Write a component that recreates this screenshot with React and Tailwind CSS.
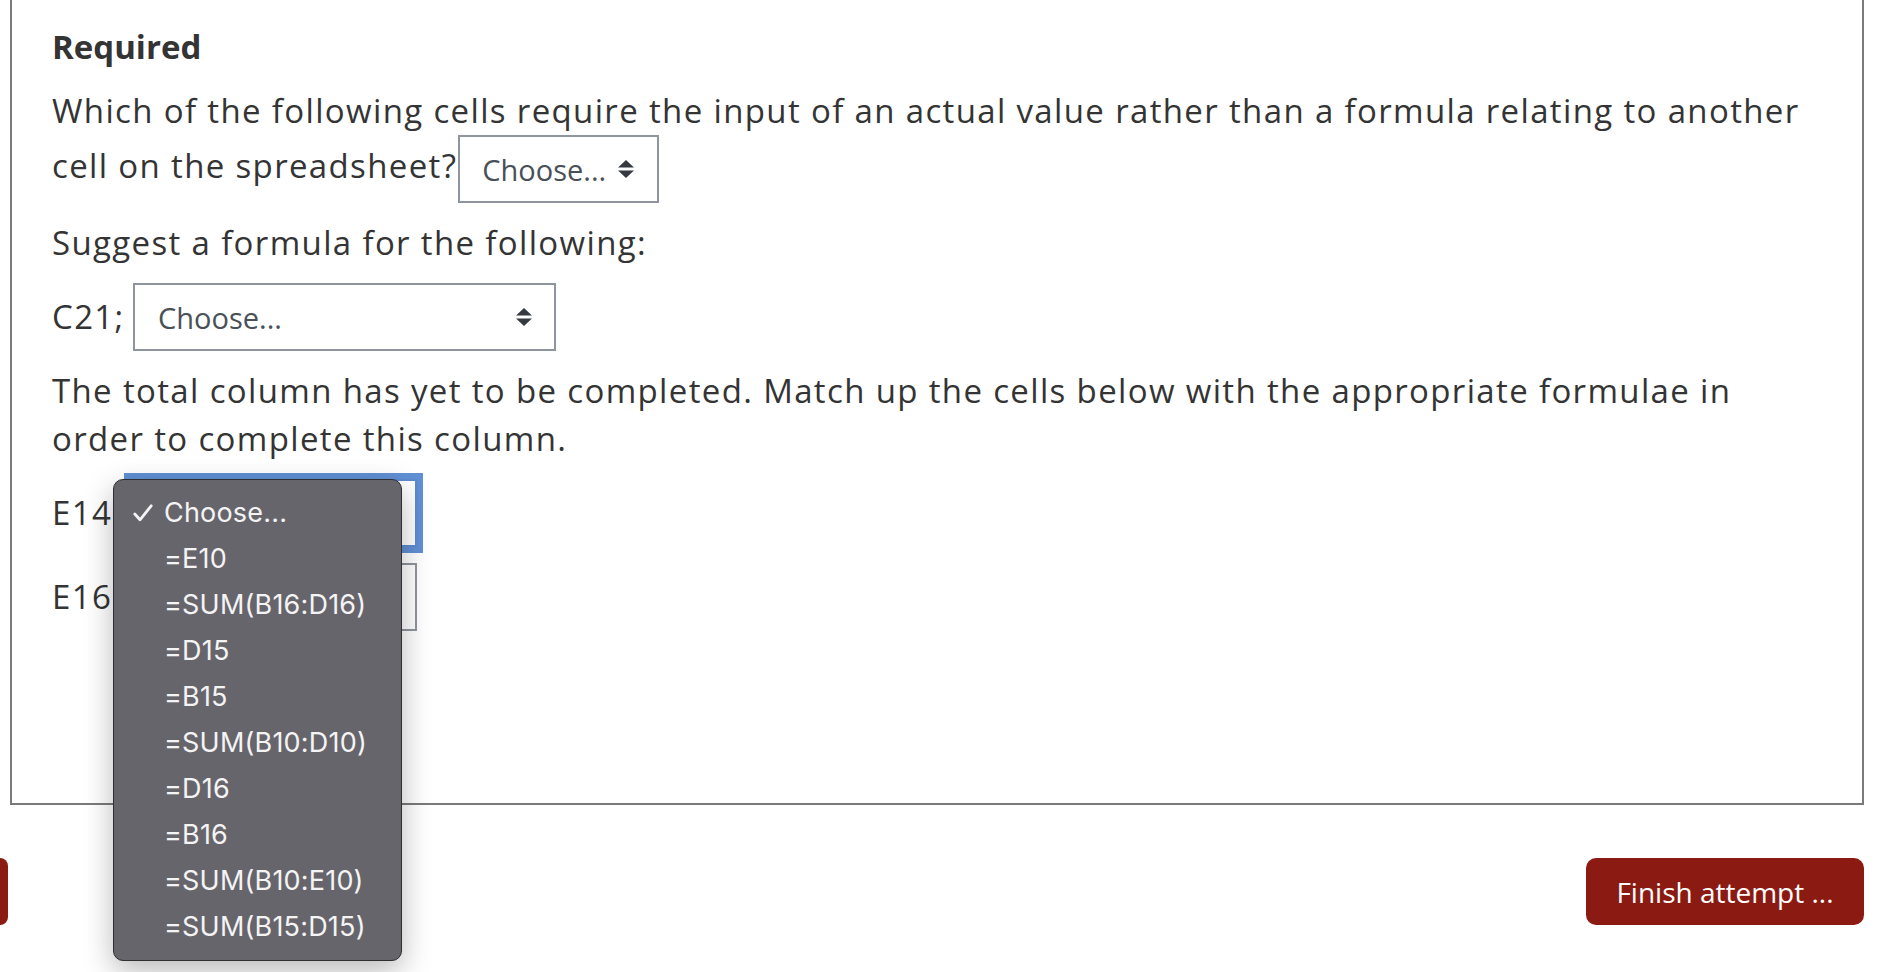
import React from "react";

const OPTIONS = [
  "Choose...",
  "=E10",
  "=SUM(B16:D16)",
  "=D15",
  "=B15",
  "=SUM(B10:D10)",
  "=D16",
  "=B16",
  "=SUM(B10:E10)",
  "=SUM(B15:D15)",
];

function Arrows() {
  return (
    <svg width="16" height="18" viewBox="0 0 16 18" className="shrink-0">
      <path d="M8 0 L16 7.5 L0 7.5 Z" fill="#343a40" />
      <path d="M0 10.5 L16 10.5 L8 18 Z" fill="#343a40" />
    </svg>
  );
}

function Select({ className = "", padL = "pl-[22px]", padR = "pr-[22px]" }) {
  return (
    <span
      className={`inline-flex items-center justify-between h-[68px] border-2 border-[#8f959e] bg-white align-middle text-[29px] tracking-normal text-[#495057] ${padL} ${padR} ${className}`}
    >
      <span className="leading-none">Choose...</span>
      <Arrows />
    </span>
  );
}

function Check() {
  return (
    <svg width="20" height="18" viewBox="0 0 20 18">
      <path d="M1.8 10 L7 15.8 L18.2 1.8" fill="none" stroke="#f4f4f4" strokeWidth="2.8" strokeLinecap="round" strokeLinejoin="round" />
    </svg>
  );
}

function Dropdown() {
  return (
    <div
      className="absolute left-[61px] top-0 w-[289px] rounded-[10px] border border-[#2f2e33] bg-[#67656c] py-[10px] shadow-[0_10px_30px_rgba(0,0,0,0.28)] z-10 tracking-[0.2px]"
      style={{ fontFamily: "Inter, 'Liberation Sans', sans-serif" }}
    >
      {OPTIONS.map((o, i) => (
        <div key={o} className="flex items-center h-[46px] pl-[19px] text-[27px] text-[#f4f4f4]">
          <span className="w-[31px] flex items-center">{i === 0 && <Check />}</span>
          <span>{o}</span>
        </div>
      ))}
    </div>
  );
}

export default function App() {
  return (
    <div className="min-h-screen bg-white overflow-hidden" style={{ fontFamily: "'Open Sans', 'Liberation Sans', sans-serif" }}>
      <div className="relative ml-[10px] w-[1854px] h-[805px] border-x-2 border-b-2 border-[#7a7a7a] pl-[40px] pt-[23px] text-[33px] leading-[48px] tracking-[1.35px] text-[#343434]">
        <p className="font-bold tracking-normal">Required</p>
        <p className="mt-[16px]">
          Which of the following cells require the input of an actual value rather than a formula relating to another
          <br />
          cell on the spreadsheet?
          <Select className="ml-[1px] w-[201px]" padL="pl-[22px]" padR="pr-[23px]" />
        </p>
        <p className="mt-[16px]">Suggest a formula for the following:</p>
        <div className="mt-[16px] flex items-center h-[68px]">
          <span className="w-[81px]">C21;</span>
          <Select className="w-[423px]" padL="pl-[23px]" padR="pr-[22px]" />
        </div>
        <p className="mt-[16px]">
          The total column has yet to be completed. Match up the cells below with the appropriate formulae in
          <br />
          order to complete this column.
        </p>
        <div className="relative mt-[16px] flex items-center h-[68px]">
          <span className="w-[78px]">E14</span>
          <span className="inline-block w-[287px] h-[68px] border-2 border-[#5d8bd0] bg-white shadow-[0_0_0_6px_#6190d4]" />
          <Dropdown />
        </div>
        <div className="mt-[16px] flex items-center h-[68px]">
          <span className="w-[78px]">E16</span>
          <span className="inline-block w-[287px] h-[68px] border-2 border-[#8f959e] bg-white" />
        </div>
      </div>
      <div className="mt-[53px] w-[1864px] flex justify-between items-start">
        <div className="w-[8px] h-[67px] rounded-r-[8px] bg-[#8b1b12]" />
        <div className="w-[278px] h-[67px] rounded-[10px] bg-[#8b1b12] flex items-center justify-center text-white text-[28px]">
          Finish attempt ...
        </div>
      </div>
    </div>
  );
}
